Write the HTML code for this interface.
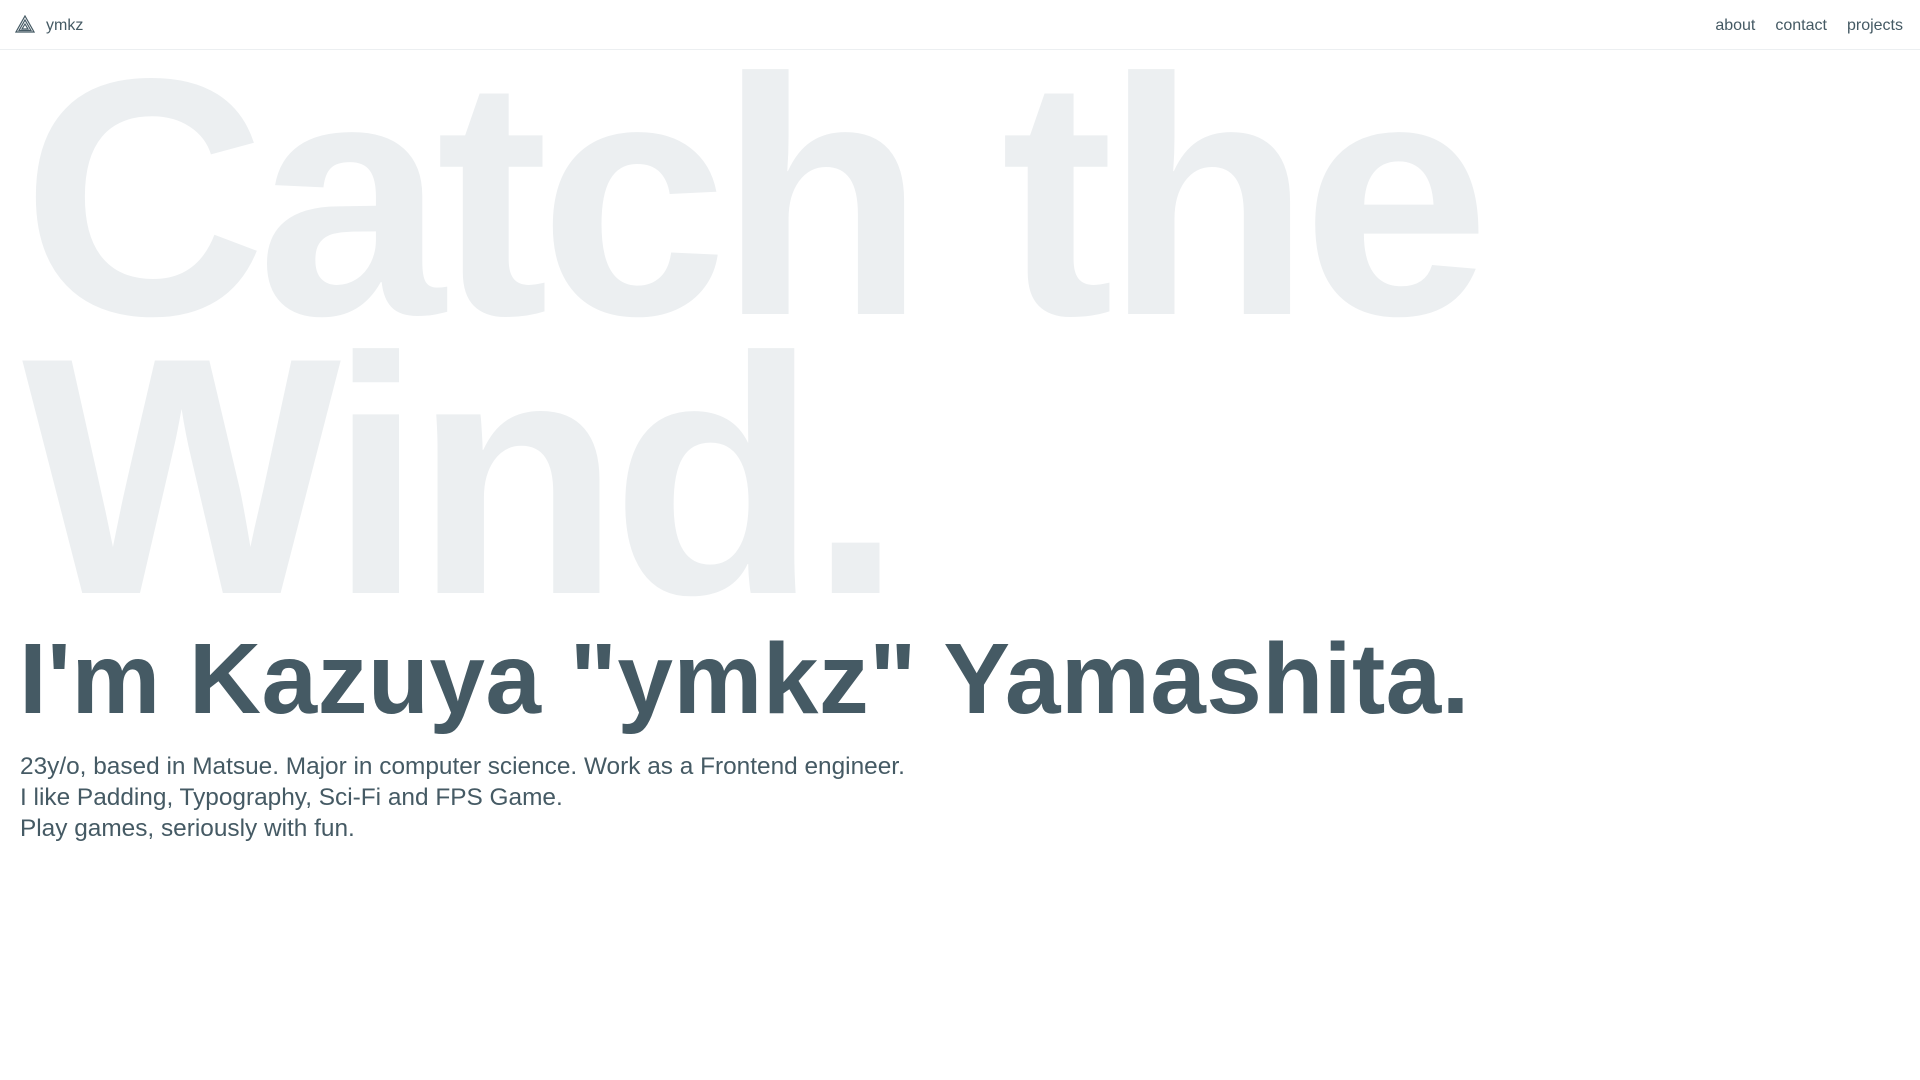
<!DOCTYPE html>
<html><head><meta charset="utf-8"><style>
html,body{margin:0;padding:0;background:#fff;width:1920px;height:1080px;overflow:hidden;font-family:"Liberation Sans",sans-serif;}
header{position:absolute;left:0;top:0;width:1920px;height:49px;border-bottom:1px solid #eceff1;}
.logo{position:absolute;left:15px;top:15px;}
.brand{position:absolute;left:46px;top:17px;font-size:16px;color:#455a64;}
nav{position:absolute;right:17px;top:17px;font-size:16px;color:#455a64;}
nav span{margin-left:20px;}
.bg{position:absolute;left:22px;top:58px;font-weight:bold;font-size:338px;line-height:279px;color:#eceff1;letter-spacing:-9px;white-space:nowrap;}
h1{position:absolute;left:19px;top:624px;margin:0;font-size:100px;line-height:110px;font-weight:900;color:#455a64;letter-spacing:0.4px;white-space:nowrap;}
p{position:absolute;left:20px;top:751px;margin:0;font-size:24.4px;line-height:31px;color:#455a64;white-space:nowrap;}
</style></head><body>
<div class="bg">Catch the<br>Wind.</div>
<header>
<svg class="logo" width="20" height="18" viewBox="0 0 20 18" fill="none" stroke="#455a64" stroke-width="1.2"><path d="M10 1 L19 17 H1 Z"/><path d="M10 5 L16 15.5 H4 Z"/><path d="M10 9 L13 14 H7 Z"/></svg>
<div class="brand">ymkz</div>
<nav><span>about</span><span>contact</span><span>projects</span></nav>
</header>
<h1>I'm Kazuya "ymkz" Yamashita.</h1>
<p>23y/o, based in Matsue. Major in computer science. Work as a Frontend engineer.<br>I like Padding, Typography, Sci-Fi and FPS Game.<br>Play games, seriously with fun.</p>
</body></html>
